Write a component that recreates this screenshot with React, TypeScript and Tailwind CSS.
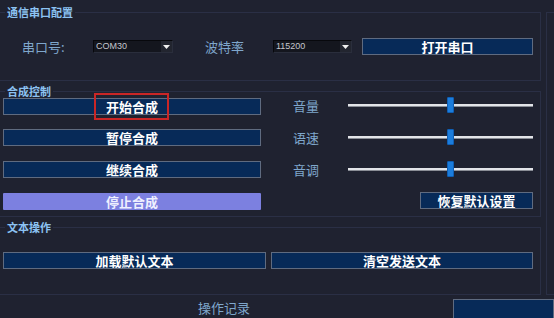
const FONT = { fontFamily: '"Noto Sans CJK SC", "Liberation Sans", sans-serif' };

function Btn({ children, className = "" }: { children: React.ReactNode; className?: string }) {
  return (
    <div
      className={`flex h-[17px] items-center justify-center border border-[#5f6b80] bg-[#072a58] text-[13px] font-bold leading-none text-white ${className}`}
    >
      {children}
    </div>
  );
}

function Combo({ value, w }: { value: string; w: string }) {
  return (
    <div className={`flex h-[13px] ${w} items-stretch border border-t-[#07080c] border-l-[#07080c] border-r-[#2a2e3c] border-b-[#2a2e3c] bg-[#14161e]`}>
      <span
        className="flex-1 pl-[2px] text-[9px] leading-[11px] text-[#c4c6cc]"
        style={{ fontFamily: '"Liberation Sans Narrow", "Liberation Sans", sans-serif' }}
      >
        {value}
      </span>
      <span className="flex w-[11px] items-center justify-center bg-[#22252f]">
        <svg width="7" height="4" viewBox="0 0 7 4">
          <path d="M0 0H7L3.5 4Z" fill="#f0f0f0" />
        </svg>
      </span>
    </div>
  );
}

function Title({ children }: { children: React.ReactNode }) {
  return (
    <div className="-mt-[8px] ml-[5px] w-fit bg-[#1f2230] px-[2px] text-[11px] font-bold leading-[14px] text-[#8cc2f2]">
      {children}
    </div>
  );
}

function Slider({ label }: { label: string }) {
  return (
    <div className="flex h-[16px] items-center">
      <span className="w-[55px] text-[13px] leading-none text-[#7fa7cc]">{label}</span>
      <div className="relative flex h-[16px] w-[185px] items-center">
        <div className="h-[3px] w-full border-b border-[#8a8e96] bg-[#e2e4e8]" />
        <div className="absolute left-[99px] top-0 h-[16px] w-[7px] rounded-[1px] border border-[#0f5fb5] bg-[#1c7ddc]" />
      </div>
    </div>
  );
}

export default function App() {
  return (
    <div className="flex h-[318px] w-[554px] flex-col overflow-hidden bg-[#1f2230]" style={FONT}>
      <div className="flex pt-[12px]">
        <div className="flex w-[541px] flex-col">
          {/* 通信串口配置 */}
          <div className="h-[69px] border-y border-r border-[#2a2f45]">
            <Title>通信串口配置</Title>
            <div className="mt-[19px] flex h-[17px] items-center">
              <span className="ml-[22px] w-[71px] text-[13px] leading-none text-[#7fa7cc]">串口号:</span>
              <Combo value="COM30" w="w-[80px]" />
              <span className="ml-[32px] w-[68px] text-[13px] leading-none text-[#7fa7cc]">波特率</span>
              <Combo value="115200" w="w-[79px]" />
              <Btn className="ml-[10px] w-[171px]">打开串口</Btn>
            </div>
          </div>

          {/* 合成控制 */}
          <div className="mt-[10px] h-[126px] border-y border-r border-[#2a2f45]">
            <Title>合成控制</Title>
            <div className="flex">
              <div className="ml-[3px] flex w-[258px] flex-col">
                <div className="relative">
                  <Btn>开始合成</Btn>
                  <div className="absolute -top-[5px] left-[91px] h-[27px] w-[75px] border-2 border-[#c92626]" />
                </div>
                <Btn className="mt-[14px]">暂停合成</Btn>
                <Btn className="mt-[15px]">继续合成</Btn>
                <div className="mt-[15px] flex h-[17px] items-center justify-center rounded-[1px] bg-[#7c80e0] text-[13px] font-bold leading-none text-[#eef0ff]">
                  停止合成
                </div>
              </div>
              <div className="-mt-[1px] ml-[32px] flex w-[240px] flex-col gap-[16px]">
                <Slider label="音量" />
                <Slider label="语速" />
                <Slider label="音调" />
                <Btn className="-mt-[1px] w-[113px] self-end">恢复默认设置</Btn>
              </div>
            </div>
          </div>

          {/* 文本操作 */}
          <div className="mt-[10px] h-[68px] border-y border-r border-[#2a2f45]">
            <Title>文本操作</Title>
            <div className="mt-[18px] flex">
              <Btn className="ml-[3px] w-[263px]">加载默认文本</Btn>
              <Btn className="ml-[5px] w-[262px]">清空发送文本</Btn>
            </div>
          </div>
        </div>
        <div className="ml-[5px] h-[283px] flex-1 border-y border-l border-[#2a2f45]" />
      </div>

      <div className="flex flex-1 items-start">
        <span className="ml-[198px] mt-[6px] text-[13px] leading-[14px] text-[#7fa7cc]">操作记录</span>
        <div className="ml-auto mt-[4px] h-[22px] w-[101px] border border-[#5f6b80] bg-[#072a58]" />
      </div>
    </div>
  );
}
